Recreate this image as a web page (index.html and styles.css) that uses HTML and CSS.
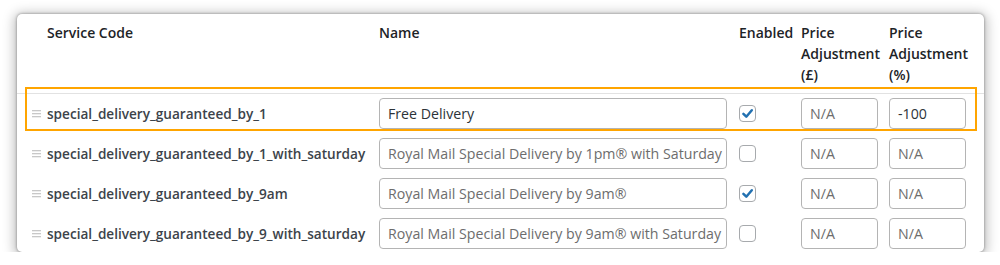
FILE: index.html
```html
<!DOCTYPE html>
<html>
<head>
<meta charset="utf-8">
<link rel="stylesheet" href="styles.css">
</head>
<body>
<div class="card">
  <div class="row head">
    <div class="cell"></div>
    <div class="cell">Service Code</div>
    <div class="cell">Name</div>
    <div class="cell pl">Enabled</div>
    <div class="cell">Price Adjustment (£)</div>
    <div class="cell">Price Adjustment (%)</div>
  </div>
  <div class="rows">
    <div class="row">
      <div class="cell"><svg class="handle" width="9" height="8" viewBox="0 0 9 8"><rect y="0" width="9" height="1.3" fill="#c8c8c8"/><rect y="3" width="9" height="1.3" fill="#c8c8c8"/><rect y="6" width="9" height="1.3" fill="#c8c8c8"/></svg></div>
      <div class="cell code">special_delivery_guaranteed_by_1</div>
      <div class="cell"><div class="input name">Free Delivery</div></div>
      <div class="cell pl"><span class="check"><svg width="15" height="15" viewBox="0 0 15 15"><path d="M3.4 7.8 L6.3 10.7 L11.8 4.3" fill="none" stroke="#2271b1" stroke-width="2.5" stroke-linecap="round" stroke-linejoin="round"/></svg></span></div>
      <div class="cell"><div class="input small ph">N/A</div></div>
      <div class="cell"><div class="input small">-100</div></div>
    </div>
    <div class="row">
      <div class="cell"><svg class="handle" width="9" height="8" viewBox="0 0 9 8"><rect y="0" width="9" height="1.3" fill="#c8c8c8"/><rect y="3" width="9" height="1.3" fill="#c8c8c8"/><rect y="6" width="9" height="1.3" fill="#c8c8c8"/></svg></div>
      <div class="cell code">special_delivery_guaranteed_by_1_with_saturday</div>
      <div class="cell"><div class="input name ph">Royal Mail Special Delivery by 1pm® with Saturday</div></div>
      <div class="cell pl"><span class="check"></span></div>
      <div class="cell"><div class="input small ph">N/A</div></div>
      <div class="cell"><div class="input small ph">N/A</div></div>
    </div>
    <div class="row">
      <div class="cell"><svg class="handle" width="9" height="8" viewBox="0 0 9 8"><rect y="0" width="9" height="1.3" fill="#c8c8c8"/><rect y="3" width="9" height="1.3" fill="#c8c8c8"/><rect y="6" width="9" height="1.3" fill="#c8c8c8"/></svg></div>
      <div class="cell code">special_delivery_guaranteed_by_9am</div>
      <div class="cell"><div class="input name ph">Royal Mail Special Delivery by 9am®</div></div>
      <div class="cell pl"><span class="check"><svg width="15" height="15" viewBox="0 0 15 15"><path d="M3.4 7.8 L6.3 10.7 L11.8 4.3" fill="none" stroke="#2271b1" stroke-width="2.5" stroke-linecap="round" stroke-linejoin="round"/></svg></span></div>
      <div class="cell"><div class="input small ph">N/A</div></div>
      <div class="cell"><div class="input small ph">N/A</div></div>
    </div>
    <div class="row last">
      <div class="cell"><svg class="handle" width="9" height="8" viewBox="0 0 9 8"><rect y="0" width="9" height="1.3" fill="#c8c8c8"/><rect y="3" width="9" height="1.3" fill="#c8c8c8"/><rect y="6" width="9" height="1.3" fill="#c8c8c8"/></svg></div>
      <div class="cell code">special_delivery_guaranteed_by_9_with_saturday</div>
      <div class="cell"><div class="input name ph">Royal Mail Special Delivery by 9am® with Saturday</div></div>
      <div class="cell pl"><span class="check"></span></div>
      <div class="cell"><div class="input small ph">N/A</div></div>
      <div class="cell"><div class="input small ph">N/A</div></div>
    </div>
  </div>
  <div class="highlight"></div>
</div>
</body>
</html>
```
FILE: styles.css
```css
html, body {
  margin: 0;
  padding: 0;
  background: #ffffff;
}
body {
  padding: 14px 0 0 17px;
  font-family: "Open Sans", "Noto Sans", sans-serif;
  font-size: 13.6px;
  color: #2c3338;
}
.card {
  position: relative;
  width: 967px;
  height: 238px;
  background: #fff;
  border-radius: 5px;
  box-shadow: 0 0 3px rgba(0,0,0,0.4), 0 2px 12px 3px rgba(0,0,0,0.25);
  overflow: hidden;
  box-sizing: border-box;
}
.row {
  display: grid;
  grid-template-columns: 22px 332px 348px 74px 88px 88px;
  margin-left: 8px;
  align-items: center;
}
.head {
  align-items: start;
  padding: 8px 0 8px 8px;
  margin-left: 0;
  font-size: 14px;
  font-weight: 600;
  line-height: 21px;
  color: #1d2327;
  border-bottom: 1px solid #e2e2e2;
}
.head .cell:nth-child(5),
.head .cell:nth-child(6) {
  padding-right: 8px;
}
.rows .row {
  padding: 4px 0 5px;
}
.rows .row.last {
  padding-bottom: 3px;
}
.pl {
  padding-left: 12px;
}
.handle {
  display: block;
  margin-left: 7px;
}
.code {
  font-weight: 600;
  color: #3c434a;
  white-space: nowrap;
}
.input {
  box-sizing: border-box;
  height: 31px;
  border: 1px solid #b4b4b4;
  border-radius: 4px;
  padding: 0 8px;
  display: flex;
  align-items: center;
  white-space: nowrap;
  overflow: hidden;
  font-size: 14.2px;
  color: #2c3338;
  background: #fff;
}
.input.name {
  width: 348px;
}
.input.small {
  width: 77px;
}
.input.ph {
  color: #6d6d6d;
}
.check {
  display: block;
  box-sizing: border-box;
  width: 17px;
  height: 17px;
  border: 1px solid #a7aaad;
  border-radius: 4px;
  background: #fff;
}
.check svg {
  display: block;
}
.highlight {
  position: absolute;
  left: 8px;
  top: 73px;
  width: 952px;
  height: 44px;
  box-sizing: border-box;
  border: 2px solid #ffa500;
  pointer-events: none;
}
```
